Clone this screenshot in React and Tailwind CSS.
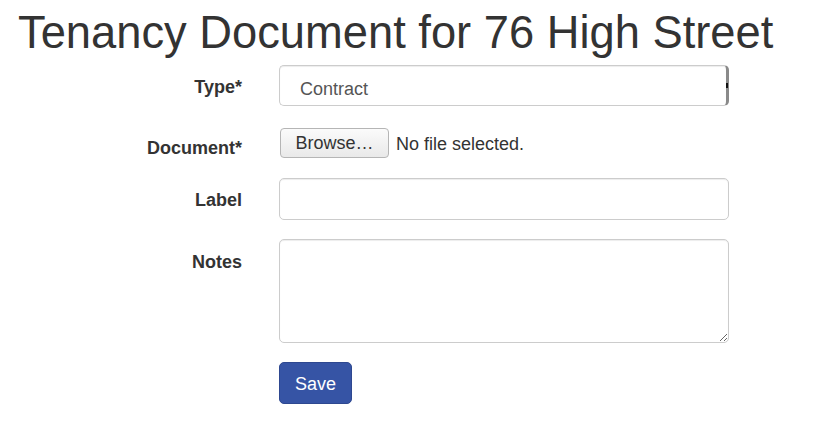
import React from "react";

function Row({ label, children, className = "", labelPad = "pt-[10px]" }) {
  return (
    <div className={`flex ${className}`}>
      <label
        className={`w-[242px] shrink-0 text-right font-bold text-[18px] leading-[25px] text-[#333] ${labelPad}`}
      >
        {label}
      </label>
      <div className="ml-[37px] w-[450px]">{children}</div>
    </div>
  );
}

export default function App() {
  return (
    <div
      className="min-h-[425px] bg-white text-[#333]"
      style={{ fontFamily: '"Liberation Sans", Arial, sans-serif' }}
    >
      <h1 className="pl-[18px] pt-[8px] text-[45.3px] leading-[49.5px] font-normal text-[#333]">
        Tenancy Document for 76 High Street
      </h1>

      <form className="mt-[7px]">
        {/* Type */}
        <Row label="Type*">
          <div className="relative h-[41px] rounded-[5px] border border-[#ccc] border-r-[3px] border-r-[#8a8a8a] shadow-[inset_0_1px_1px_rgba(0,0,0,0.075)] flex items-center pl-[20px] pt-[8px] text-[18px] text-[#555]">
            Contract
            <span className="absolute right-[-2px] top-[17px] w-[2px] h-[5px] bg-[#111]"></span>
          </div>
        </Row>

        {/* Document */}
        <Row label="Document*" className="mt-[20px]">
          <div className="flex items-center h-[32px] pt-[2px]">
            <span className="flex items-center justify-center ml-[1px] w-[109px] h-[30px] pt-[2px] rounded-[4px] border border-[#b5b5b5] bg-gradient-to-b from-[#fbfbfb] to-[#e9e9e9] text-[18px] text-[#333]">
              Browse…
            </span>
            <span className="ml-[7px] pt-[3px] text-[18px] text-[#333]">No file selected.</span>
          </div>
        </Row>

        {/* Label */}
        <Row label="Label" className="mt-[17px]">
          <input
            type="text"
            className="block w-full h-[42px] rounded-[5px] border border-[#ccc] bg-white px-[15px] text-[18px] shadow-[inset_0_1px_1px_rgba(0,0,0,0.075)] outline-none"
          />
        </Row>

        {/* Notes */}
        <Row label="Notes" className="mt-[19px]" labelPad="pt-[11px]">
          <textarea
            className="block w-full h-[104px] rounded-[5px] border border-[#ccc] bg-white px-[15px] py-[8px] text-[18px] shadow-[inset_0_1px_1px_rgba(0,0,0,0.075)] outline-none resize-y"
          ></textarea>
        </Row>

        {/* Save */}
        <div className="flex mt-[19px]">
          <div className="w-[242px] shrink-0"></div>
          <button
            type="button"
            className="ml-[37px] w-[73px] h-[42px] pt-[3px] rounded-[5px] border border-[#2e4890] bg-[#3654a5] text-white text-[18px]"
          >
            Save
          </button>
        </div>
      </form>
    </div>
  );
}
